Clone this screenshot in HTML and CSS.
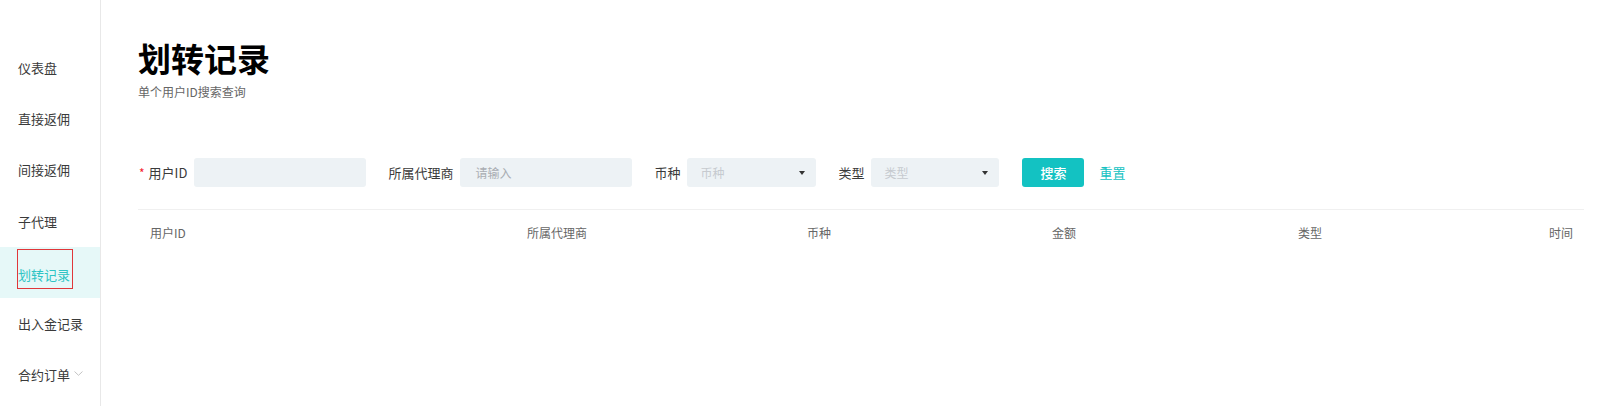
FILE: index.html
```html
<!DOCTYPE html>
<html lang="zh">
<head>
<meta charset="utf-8">
<title>划转记录</title>
<link rel="stylesheet" href="styles.css">
</head>
<body>
<div class="layout">
  <aside class="sidebar">
    <div class="menu-item">仪表盘</div>
    <div class="menu-item">直接返佣</div>
    <div class="menu-item">间接返佣</div>
    <div class="menu-item">子代理</div>
    <div class="menu-item active"><span class="active-box">划转记录</span></div>
    <div class="menu-item">出入金记录</div>
    <div class="menu-item">合约订单<svg class="chev" width="9" height="5" viewBox="0 0 9 5"><path d="M0.5 0.5 L4.5 4.3 L8.5 0.5" fill="none" stroke="#c4c4c4" stroke-width="1"/></svg></div>
  </aside>
  <main class="main">
    <h1 class="title">划转记录</h1>
    <div class="subtitle">单个用户ID搜索查询</div>
    <div class="form">
      <div class="form-item">
        <label class="label"><span class="req">*</span>用户ID</label>
        <div class="input w172"></div>
      </div>
      <div class="form-item">
        <label class="label">所属代理商</label>
        <div class="input w172"><span class="ph">请输入</span></div>
      </div>
      <div class="form-item">
        <label class="label">币种</label>
        <div class="input select w129"><span class="ph light">币种</span><span class="caret"></span></div>
      </div>
      <div class="form-item">
        <label class="label">类型</label>
        <div class="input select w128"><span class="ph light">类型</span><span class="caret"></span></div>
      </div>
      <button class="btn">搜索</button>
      <a class="reset">重置</a>
    </div>
    <div class="table-head">
      <div class="th">用户ID</div>
      <div class="th">所属代理商</div>
      <div class="th">币种</div>
      <div class="th">金额</div>
      <div class="th">类型</div>
      <div class="th right">时间</div>
    </div>
  </main>
</div>
</body>
</html>
```
FILE: styles.css
```css
* { box-sizing: border-box; }
html, body { margin: 0; padding: 0; background: #fff; }
body {
  font-family: "Noto Sans CJK SC", "Liberation Sans", sans-serif;
  color: #333;
  width: 1600px;
  height: 406px;
  overflow: hidden;
}
.layout { display: flex; height: 406px; }
.sidebar {
  width: 101px;
  flex: none;
  border-right: 1px solid #e8e8e8;
  padding-top: 41.5px;
}
.menu-item {
  height: 51.3px;
  display: flex;
  align-items: center;
  padding-left: 18px;
  font-size: 13px;
  color: #3a3a3a;
  white-space: nowrap;
}
.menu-item.active { background: #e6f8f8; color: #2ec4c4; align-items: flex-start; }
.active-box {
  display: inline-flex;
  align-items: center;
  height: 40px;
  margin-top: 2.6px;
  padding-top: 10px;
  margin-left: -1px;
  padding-right: 2px;
  border: 1px solid #e0373a;
}
.chev { margin-left: 4px; margin-top: -3px; }
.main {
  flex: 1;
  padding: 0 16px 0 37px;
}
.title {
  margin: 40px 0 0;
  font-size: 33px;
  line-height: 37px;
  font-weight: 700;
  color: #000;
  letter-spacing: 0;
}
.subtitle {
  margin-top: 7px;
  font-size: 12px;
  line-height: 16px;
  color: #666;
}
.form {
  display: flex;
  align-items: center;
  margin-top: 58px;
  height: 29px;
}
.form-item {
  display: flex;
  align-items: center;
  margin-right: 22px;
}
.label {
  font-size: 13px;
  color: #3a3a3a;
  margin-right: 7px;
  white-space: nowrap;
  display: flex;
  align-items: center;
}
.req { color: #f5222d; font-size: 12px; margin-right: 4px; margin-left: 1px; }
.input {
  height: 29px;
  background: #edf2f5;
  border-radius: 3px;
  display: flex;
  align-items: center;
  padding-left: 15px;
  font-size: 12px;
}
.w172 { width: 172px; }
.w129 { width: 129px; padding-left: 13px; }
.w128 { width: 128px; padding-left: 13px; }
.ph { color: #a9adb2; }
.ph.light { color: #c6cacf; }
.select { justify-content: space-between; padding-right: 11px; }
.caret {
  width: 0; height: 0;
  border-left: 3px solid transparent;
  border-right: 3px solid transparent;
  border-top: 4px solid #333;
}
.btn {
  width: 62px;
  height: 29px;
  margin-left: 1px;
  border: none;
  border-radius: 3px;
  background: #13c2c2;
  color: #fff;
  font-family: inherit;
  font-size: 13px;
  font-weight: 500;
  padding: 0;
}
.reset {
  margin-left: 15px;
  font-size: 13px;
  color: #13c2c2;
}
.table-head {
  margin-top: 22px;
  border-top: 1px solid #f0f0f0;
  display: grid;
  grid-template-columns: 377px 280px 245px 246px 150px 1fr;
  height: 46px;
  align-items: center;
}
.th {
  font-size: 12px;
  color: #666;
  padding: 0 12px;
}
.th.right { text-align: right; padding-right: 11px; }
```
